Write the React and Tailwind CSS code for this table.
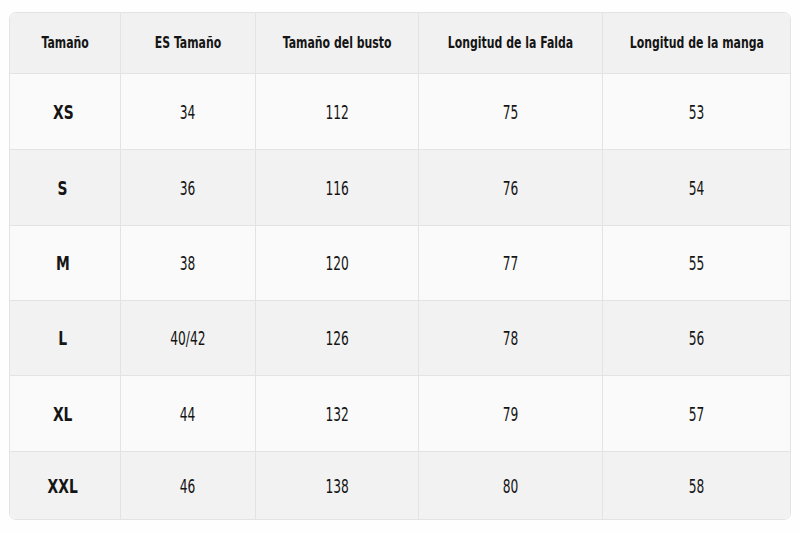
import React from "react";

const rows = [
  ["XS", "34", "112", "75", "53"],
  ["S", "36", "116", "76", "54"],
  ["M", "38", "120", "77", "55"],
  ["L", "40/42", "126", "78", "56"],
  ["XL", "44", "132", "79", "57"],
  ["XXL", "46", "138", "80", "58"],
];
const heights = ["h-[76px]", "h-[76px]", "h-[75px]", "h-[75px]", "h-[76px]", "h-[67px]"];
const headers = ["Tamaño", "ES Tamaño", "Tamaño del busto", "Longitud de la Falda", "Longitud de la manga"];
const widths = ["w-[110px]", "w-[135px]", "w-[164px]", "w-[184px]", "w-[188px]"];

export default function App() {
  return (
    <div className="w-[800px] h-[533px] bg-[#fefefe] pt-[12px] pl-[9px]" style={{ fontFamily: '"DejaVu Sans Condensed", "DejaVu Sans", sans-serif' }}>
      <div className="w-[782px] rounded-[7px] border border-[#e3e3e3] overflow-hidden">
        <div className="flex h-[61px] bg-[#f1f1f1] border-b border-[#e3e3e3]">
          {headers.map((h, i) => (
            <div key={i} className={`${widths[i]} flex items-center justify-center text-[15px] font-bold text-[#151515] ${i > 0 ? "border-l border-[#e3e3e3]" : ""}`}>
              <span className="inline-block whitespace-nowrap scale-x-[0.81]">{h}</span>
            </div>
          ))}
        </div>
        {rows.map((r, ri) => (
          <div key={ri} className={`flex ${heights[ri]} ${ri % 2 === 0 ? "bg-[#fafafa]" : "bg-[#f2f2f2]"} ${ri < rows.length - 1 ? "border-b border-[#e3e3e3]" : ""}`}>
            {r.map((c, ci) => (
              <div key={ci} className={`${widths[ci]} flex items-center justify-center text-[#151515] ${ci > 0 ? "border-l border-[#e3e3e3]" : ""}`}>
                {ci === 0 ? (
                  <span className="inline-block whitespace-nowrap font-bold text-[20px] scale-x-[0.77] -translate-x-[2px]">{c}</span>
                ) : (
                  <span className="inline-block whitespace-nowrap text-[20px] scale-x-[0.68]">{c}</span>
                )}
              </div>
            ))}
          </div>
        ))}
      </div>
    </div>
  );
}
